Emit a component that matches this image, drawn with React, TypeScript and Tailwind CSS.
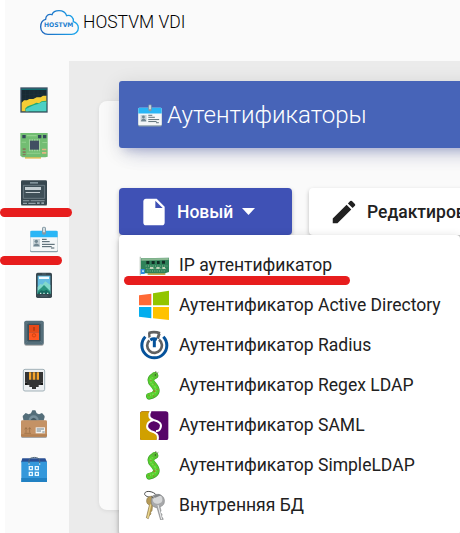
import React from 'react';

type IconProps = { className?: string };

const CloudLogo = () => (
  <svg className="h-7 w-10 shrink-0" viewBox="0 0 120 84">
    <defs>
      <linearGradient id="cloud" x1="0" x2="1" y1="0" y2="0">
        <stop offset="0" stopColor="#1f66bd" />
        <stop offset="1" stopColor="#1ba8ee" />
      </linearGradient>
    </defs>
    <path
      d="M27 76C14 76 5 67 5 54c0-12 6-21 15-23 0-11 8-17 19-14C42 8 51 5 60 5c12 0 20 7 23 15 12-3 22 5 20 18 9 3 15 10 15 19 0 11-9 19-20 19Z"
      fill="none"
      stroke="url(#cloud)"
      strokeWidth="4"
    />
    <text x="15" y="54.500" textLength="88" lengthAdjust="spacingAndGlyphs" fontFamily="DejaVu Sans, sans-serif" fontWeight="700" fontSize="19" fill="#2380d0">
      HOSTVM
    </text>
  </svg>
);

const ChartIcon = () => (
  <svg className="size-7" viewBox="0 0 84 84">
    <path fill="#3f5468" d="M1 4h82v76H1z" />
    <path fill="#182a33" d="M5 12h74v64H5z" />
    <path fill="#126c70" d="M4 8h76v4H4z" />
    <path stroke="#243944" d="M17 13v44M29 13v44M42 13v44M54 13v44M66 13v44M5 25h74M5 37h74" />
    <path fill="#f4cd35" d="M5 50l7-7h9l7-4h12l10-5h12l7-5h10v23L51 57 25 76H5z" />
    <path fill="#20a875" d="M16 76V67l7-6 8-3 9-3 9-5 8 2 8-6 14-2v32z" />
    <path fill="#4dd0c4" d="M18 76v-7l7-4 9-4 9-4 11-3 12-6 13-1v29z" />
  </svg>
);

const BoardIcon = () => (
  <svg className="size-7" viewBox="0 0 84 84">
    <path fill="#e8c25a" d="M15 72h48v8H15z" />
    <path fill="#72bd72" d="M1 3h82v71l-7 2H7l-6-5z" />
    <path fill="#93d18e" d="M20 9h30v4H20zM5 29h13v3H5zM67 30h14v3H67zM20 62h41v3H20z" />
    <path fill="#34495a" d="M7 9h10v10H7zM54 9h10v10H54zM69 9h10v10H69z" />
    <path stroke="#b6ddb2" strokeWidth="36" strokeDasharray="2 3" d="M27 40h32" />
    <path fill="#414f62" d="M30 26h27v27H30z" />
    <path fill="#86795d" d="M8 49h9v5H8zM8 58h9v5H8zM8 66h9v4H8z" />
    <path fill="#e1b584" d="M66 50h13v5H66zM66 60h13v5H66z" />
  </svg>
);

const ServerIcon = () => (
  <svg className="size-7 drop-shadow-[0_1px_0.500px_rgba(0,0,0,0.35)]" viewBox="0 0 84 84">
    <rect x="3" y="4" width="78" height="74" rx="4" fill="#37474f" />
    <path fill="#81939b" d="M30 9h24v5H30z" />
    <path fill="#3f5058" stroke="#84939a" strokeWidth="2" d="M10 19h64v39H10z" />
    <path fill="#c4ced2" d="M15 24h48v9H15zM17 39h43v3H17z" />
    <path fill="#90a0a8" d="M9 64h19v3H9zM32 64h42v3H32zM9 71h12v4H9zM25 71h22v4H25zM51 70h8v5h-8zM64 70h8v5h-8z" />
  </svg>
);

const CardIcon = ({ className = '' }: IconProps) => (
  <svg className={className} viewBox="0 0 84 84">
    <rect x="0" y="18" width="84" height="64" rx="5" fill="#8da0aa" />
    <rect x="1" y="17" width="82" height="61" rx="4" fill="#f4f7f8" />
    <path fill="#29b6f6" d="M1 37V20q0-3 4-3h74q4 0 4 3v17z" />
    <path fill="#c6d1d6" d="M9 42h21v24H9z" />
    <circle cx="19" cy="49" r="5" fill="#718792" />
    <path fill="#718792" d="M11 64v-4q8-9 17 0v4z" />
    <path stroke="#455a64" strokeWidth="3" d="M36 43h14M36 50h23M36 58h38M36 65h29M63 69h10" />
    <rect x="36" y="5" width="12" height="24" rx="5" fill="#859aa5" />
    <path fill="#d3dde1" d="M39 8h6v14h-6z" />
  </svg>
);

const PhoneIcon = () => (
  <svg className="size-7" viewBox="0 0 84 84">
    <rect x="18" y="5" width="48" height="76" rx="5" fill="#37474f" />
    <path fill="#64bce0" d="M23 14h38v55H23z" />
    <path fill="#f3fbff" d="M27 17h30v7H27z" />
    <path fill="#82d8ca" d="M23 48l8-9 6 2 9-10 15 11v27H23z" />
    <path fill="#2a957f" d="M23 60l11-10 8-8 19 19v8H23z" />
    <path fill="#176a61" d="M23 67l10-9 9 2 8-4 11 10v3H23z" />
    <path fill="#d2eee7" d="M30 65h4v4h-4zM40 65h4v4h-4zM51 65h4v4h-4z" />
    <path stroke="#60767f" strokeWidth="2" d="M36 9h12M31 75h22" />
  </svg>
);

const SwitchIcon = () => (
  <svg className="size-7 drop-shadow-[0_1px_0.500px_rgba(0,0,0,0.35)]" viewBox="0 0 84 84">
    <rect x="13" y="8" width="58" height="72" rx="5" fill="#546e7a" />
    <path fill="#3b4f59" d="M22 17h40v53H22z" />
    <path stroke="#78909c" d="M15 10l9 9M69 10l-9 9M15 78l9-9M69 78l-9-9" />
    <path fill="#e64a19" d="M27 21h30v22H27z" />
    <path fill="#ff5722" d="M27 43h30v23H27z" />
    <path stroke="#a7360f" strokeWidth="4" d="M42 27v11" />
    <circle cx="42" cy="52" r="5" fill="none" stroke="#c8400f" strokeWidth="2.500" />
  </svg>
);

const EthernetIcon = () => (
  <svg className="size-7" viewBox="0 0 84 84">
    <rect x="10" y="16" width="64" height="65" rx="5" fill="#eceff1" stroke="#a2b1b8" strokeWidth="3" />
    <path fill="#343434" d="M15 24h54v32h-6v7h-7v6h-8v6H36v-6h-8v-6h-7v-7h-6z" />
    <path fill="#f5a52d" d="M27 25h7v22h-7zM38 25h8v22h-8zM50 25h7v22h-7z" />
    <path fill="#151515" d="M15 56h7v7h-7zM62 56h7v7h-7z" />
  </svg>
);

const PackageIcon = () => (
  <svg className="size-7 drop-shadow-[0_1px_0.500px_rgba(0,0,0,0.35)]" viewBox="0 0 84 84">
    <path fill="#546e7a" d="M37 1h9l4 9 7 3 9-4 8 9-3 13H11L8 18l9-9 9 4 7-3z" />
    <circle cx="41" cy="31" r="15" fill="#78909c" />
    <path fill="#455a64" d="M31 31q10-15 20 0z" />
    <rect x="3" y="31" width="78" height="49" rx="4" fill="#c49265" />
    <path fill="#b58152" d="M3 73h78v3q-1 4-4 4H7q-3 0-4-4z" />
    <path fill="none" stroke="#93683f" strokeWidth="2" d="M13 70h20M18 68V53m-4 5 4-5 4 5M29 68V53m-4 5 4-5 4 5" />
    <path fill="#f1f2f1" d="M47 52h28v18H47z" />
    <path stroke="#70828a" strokeWidth="3" d="M50 57h22M50 63h13M67 66h7" />
  </svg>
);

const BagIcon = () => (
  <svg className="size-7" viewBox="0 0 84 84">
    <path fill="#294f93" d="M7 7h69l5 12H3z" />
    <path fill="#3498db" d="M4 17h77v61H4z" />
    <path fill="#2181c3" d="M4 66h77v12H4z" />
    <path fill="none" stroke="#53697a" strokeWidth="3" d="M27 24V14C27 1 59 1 59 14v10" />
    <path fill="#a9d8f5" d="M25 22h4v4h-4zM57 22h4v4h-4z" />
    <path fill="none" stroke="#e6f7ff" strokeWidth="4" d="M28 32h9v9h-9zM46 32h9v9h-9zM28 49h9v9h-9zM46 49h9v9h-9z" />
  </svg>
);

const NetworkCardIcon = () => (
  <svg className="size-[30px]" viewBox="0 0 90 90">
    <path fill="#c5ab53" d="M26 66h53v9H26z" />
    <path fill="#2f8259" d="M6 25l84-2v43l-12 4H6z" />
    <path fill="#8bb994" d="M7 25l82-1v6L7 32z" />
    <path stroke="#bac7bc" strokeWidth="4" d="M4 20v56" />
    <path fill="#122c24" d="M22 33h9v9H22zM38 33h9v9H38zM54 33h8v9h-8zM69 32h9v9H69z" />
    <path stroke="#8dba96" strokeWidth="3" strokeDasharray="3 4" d="M20 48h65M22 56h60M25 63h56" />
    <path fill="#c3d2b8" d="M33 51h10v6H33zM52 51h10v6H52zM70 51h8v6h-8z" />
    <path fill="#2f8ae0" d="M5 57h12v15H5z" />
    <path fill="#b0def9" d="M9 61h6v5H9z" />
  </svg>
);

const WindowsIcon = () => (
  <svg className="size-[30px]" viewBox="0 0 90 90">
    <path fill="#ff6a36" d="M0 16l37-5v35H0z" />
    <path fill="#92c500" d="M42 10l48-8v44H42z" />
    <path fill="#04aeee" d="M0 51h37v34L0 80z" />
    <path fill="#ffc200" d="M42 51h48v39l-48-5z" />
  </svg>
);

const RadiusIcon = () => (
  <svg className="size-[30px]" viewBox="0 0 90 90">
    <path fill="none" stroke="#05529b" strokeWidth="9" d="M19 20A37.500 37.500 0 1 0 73 20" />
    <path fill="none" stroke="#606162" strokeWidth="8" d="M29 9q17-6 34 1M31 31a22 22 0 1 0 29-2" />
    <path fill="#606162" d="M27 8l7-2 1 15-7 3zM57 9l8 3-5 16-8-5z" />
    <path fill="none" stroke="#05529b" strokeWidth="9" d="M34 30q9-6 20-2M46 30v22" />
  </svg>
);

const CaterpillarIcon = () => (
  <svg className="size-[30px]" viewBox="0 0 90 90">
    <path fill="none" stroke="#3f9a2c" strokeWidth="20" strokeLinecap="round" d="M48 17C33 23 32 33 43 44 58 61 54 74 31 79" />
    <path fill="none" stroke="#56cf2e" strokeWidth="17" strokeLinecap="round" d="M47 17C33 24 33 34 43 44 58 60 53 73 31 78" />
    <path fill="none" stroke="#77dc4b" strokeWidth="5" strokeDasharray="6 3" d="M44 20C30 28 32 36 44 46 57 60 51 71 33 76" />
    <circle cx="47" cy="15" r="9" fill="#5abe34" />
    <path stroke="#425b22" strokeWidth="2" d="M49 8l2-5M53 11l5-4" />
    <g fill="#a7702c">
      <circle cx="36" cy="32" r="1.800" />
      <circle cx="46" cy="42" r="1.800" />
      <circle cx="54" cy="58" r="2" />
      <circle cx="46" cy="64" r="3" />
      <circle cx="44" cy="78" r="2" />
      <circle cx="30" cy="76" r="2" />
    </g>
    <circle cx="49" cy="15" r="2" fill="#263c17" />
  </svg>
);

const SamlIcon = () => (
  <svg className="size-[30px]" viewBox="0 0 90 90">
    <rect x="3" y="4" width="85" height="87" rx="8" fill="#570568" />
    <path fill="#d0a000" d="M11 4h22c-8 13-4 22 8 26C21 34 17 54 33 62c16 4 26 12 19 29H11q-8 0-8-8V12q0-8 8-8z" />
    <path fill="none" stroke="#fff" strokeWidth="6" d="M35 3c-8 13-5 23 9 27 18 4 26 13 20 25-3 6-7 9-13 8" />
    <path fill="none" stroke="#fff" strokeWidth="6" d="M43 31C22 35 18 55 35 63c16 4 26 12 20 29" />
  </svg>
);

const KeysIcon = () => (
  <svg className="size-[30px]" viewBox="0 0 90 90">
    <path fill="none" stroke="#4b4c4c" strokeWidth="3" d="M38 23C23 21 12 15 19 7c8-7 32 0 37 14" />
    <path fill="#b59a57" stroke="#776537" strokeWidth="1.500" d="M24 26c4-9 22-10 26-2 5 10-1 17-9 20l-2 18-4 5 1 5-5 5-3 9-6-3 9-38c-8-3-10-11-7-19z" />
    <path stroke="#ead790" strokeWidth="4" d="M35 43l-9 41" />
    <path fill="#a7a8aa" stroke="#77787a" strokeWidth="1.500" d="M38 24c5-17 35-14 38 5 2 14-6 20-13 21l3 12-2 5 5 6-1 6 5 9-8 3-11-38c-16-1-20-15-16-29z" />
    <path fill="#d6d7d8" d="M43 22c5-11 22-9 26 1 4 11-3 18-15 18s-15-10-11-19z" />
    <path stroke="#eceded" strokeWidth="3" d="M57 45l11 43" />
    <path fill="#858789" d="M43 17l16-5 8 4-20 8z" />
    <path fill="none" stroke="#444" strokeWidth="2" d="M45 24q-8-1-8-5" />
  </svg>
);

const navItems = [
  { id: 'chart', icon: <ChartIcon />, offset: 'mt-0' },
  { id: 'board', icon: <BoardIcon />, offset: 'mt-[18px]' },
  { id: 'server', icon: <ServerIcon />, offset: 'mt-[19px]' },
  { id: 'card', icon: <CardIcon className="size-7" />, offset: 'mt-[18px] ml-2.5' },
  { id: 'phone', icon: <PhoneIcon />, offset: 'mt-[18px] ml-2.5' },
  { id: 'switch', icon: <SwitchIcon />, offset: 'mt-[19px]' },
  { id: 'ethernet', icon: <EthernetIcon />, offset: 'mt-[18px]' },
  { id: 'package', icon: <PackageIcon />, offset: 'mt-[18px]' },
  { id: 'bag', icon: <BagIcon />, offset: 'mt-[18px]' },
];

const menuItems = [
  { label: 'IP аутентификатор', icon: <NetworkCardIcon /> },
  { label: 'Аутентификатор Active Directory', icon: <WindowsIcon /> },
  { label: 'Аутентификатор Radius', icon: <RadiusIcon /> },
  { label: 'Аутентификатор Regex LDAP', icon: <CaterpillarIcon /> },
  { label: 'Аутентификатор SAML', icon: <SamlIcon /> },
  { label: 'Аутентификатор SimpleLDAP', icon: <CaterpillarIcon /> },
  { label: 'Внутренняя БД', icon: <KeysIcon /> },
];

export default function App() {
  return (
    <div className="relative h-[533px] w-[460px] overflow-hidden bg-white pl-[5px] font-['Roboto',sans-serif] text-[#212121]">
      <div className="flex h-full flex-col bg-[#fafafa]">
        <header className="flex h-[61px] shrink-0 items-start pt-[9px] pl-[34px]">
          <CloudLogo />
          <span className="ml-[4px] text-[17.5px] leading-[26px] font-light text-black">HOSTVM VDI</span>
        </header>

        <div className="flex min-h-0 flex-1">
          <nav className="flex w-16 shrink-0 flex-col pt-[25px] pl-[15px]">
            {navItems.map((item) => (
              <div key={item.id} className={`h-7 shrink-0 ${item.offset}`}>{item.icon}</div>
            ))}
          </nav>

          <main className="min-w-0 flex-1 overflow-hidden bg-[#ebebeb] pt-10 pl-[30px]">
            <section className="h-[409px] w-[400px] rounded-lg bg-[#fafafa] pl-5 shadow-[0_1px_4px_rgba(0,0,0,0.08)]">
              <div className="-mt-5 inline-flex h-[67px] w-[380px] items-center rounded-[3px] bg-[#4764b8] pl-[19px] text-white shadow-[0_12px_20px_-10px_rgba(63,81,181,0.28),0_4px_20px_rgba(0,0,0,0.12),0_7px_8px_-5px_rgba(63,81,181,0.2)]">
                <CardIcon className="size-6" />
                <h1 className="ml-[5px] text-[24.1px] leading-8 font-light">Аутентификаторы</h1>
              </div>

              <div className="mt-10 flex w-[400px] gap-[17px]">
                <button className="flex h-[47px] w-[173px] shrink-0 items-center rounded bg-[#3f51b5] pl-[19px] text-white shadow-[0_2px_4px_rgba(0,0,0,0.25)]">
                  <svg className="size-8" viewBox="0 0 24 24" fill="currentColor">
                    <path d="M6 2c-1.100 0-1.990.9-1.990 2L4 20c0 1.100.89 2 1.990 2H18c1.100 0 2-.9 2-2V8l-6-6H6zm7 7V3.500L18.500 9H13z" />
                  </svg>
                  <span className="ml-[7px] pt-0.5 text-[17.5px] font-medium">Новый</span>
                  <svg className="ml-[9px] h-[7px] w-[13px]" viewBox="0 0 13 7" fill="currentColor"><path d="M0 0h13L6.500 7z" /></svg>
                </button>
                <button className="flex h-[47px] w-[230px] shrink-0 items-center rounded bg-white pl-5 shadow-[0_2px_4px_rgba(0,0,0,0.25)]">
                  <svg className="size-[30px]" viewBox="0 0 24 24" fill="currentColor">
                    <path d="M3 17.250V21h3.750L17.810 9.940l-3.750-3.750L3 17.250zM20.710 7.040a1 1 0 0 0 0-1.410l-2.340-2.340a1 1 0 0 0-1.410 0l-1.830 1.830 3.750 3.750 1.830-1.830z" />
                  </svg>
                  <span className="ml-[8px] pt-0.5 text-[17.5px] font-medium whitespace-nowrap">Редактировать</span>
                </button>
              </div>
            </section>
          </main>
        </div>
      </div>

      <ul className="absolute top-[235px] left-[119px] h-[300px] w-[341px] rounded bg-white pt-[10px] shadow-[0_2px_4px_-1px_rgba(0,0,0,0.2),0_4px_5px_rgba(0,0,0,0.14),0_1px_10px_rgba(0,0,0,0.12)]">
        {menuItems.map((item) => (
          <li key={item.label} className="flex h-10 items-center gap-2.5 pl-5 text-[17.55px] whitespace-nowrap">
            {item.icon}
            <span>{item.label}</span>
          </li>
        ))}
      </ul>

      <div className="absolute top-[208px] left-0 h-[9px] w-[72px] rounded-full bg-[#e71d1d]" />
      <div className="absolute top-[256px] left-0 h-[9px] w-[62px] rounded-full bg-[#e71d1d]" />
      <div className="absolute top-[276px] left-[124px] h-[9px] w-[226px] rounded-full bg-[#e71d1d]" />
    </div>
  );
}
